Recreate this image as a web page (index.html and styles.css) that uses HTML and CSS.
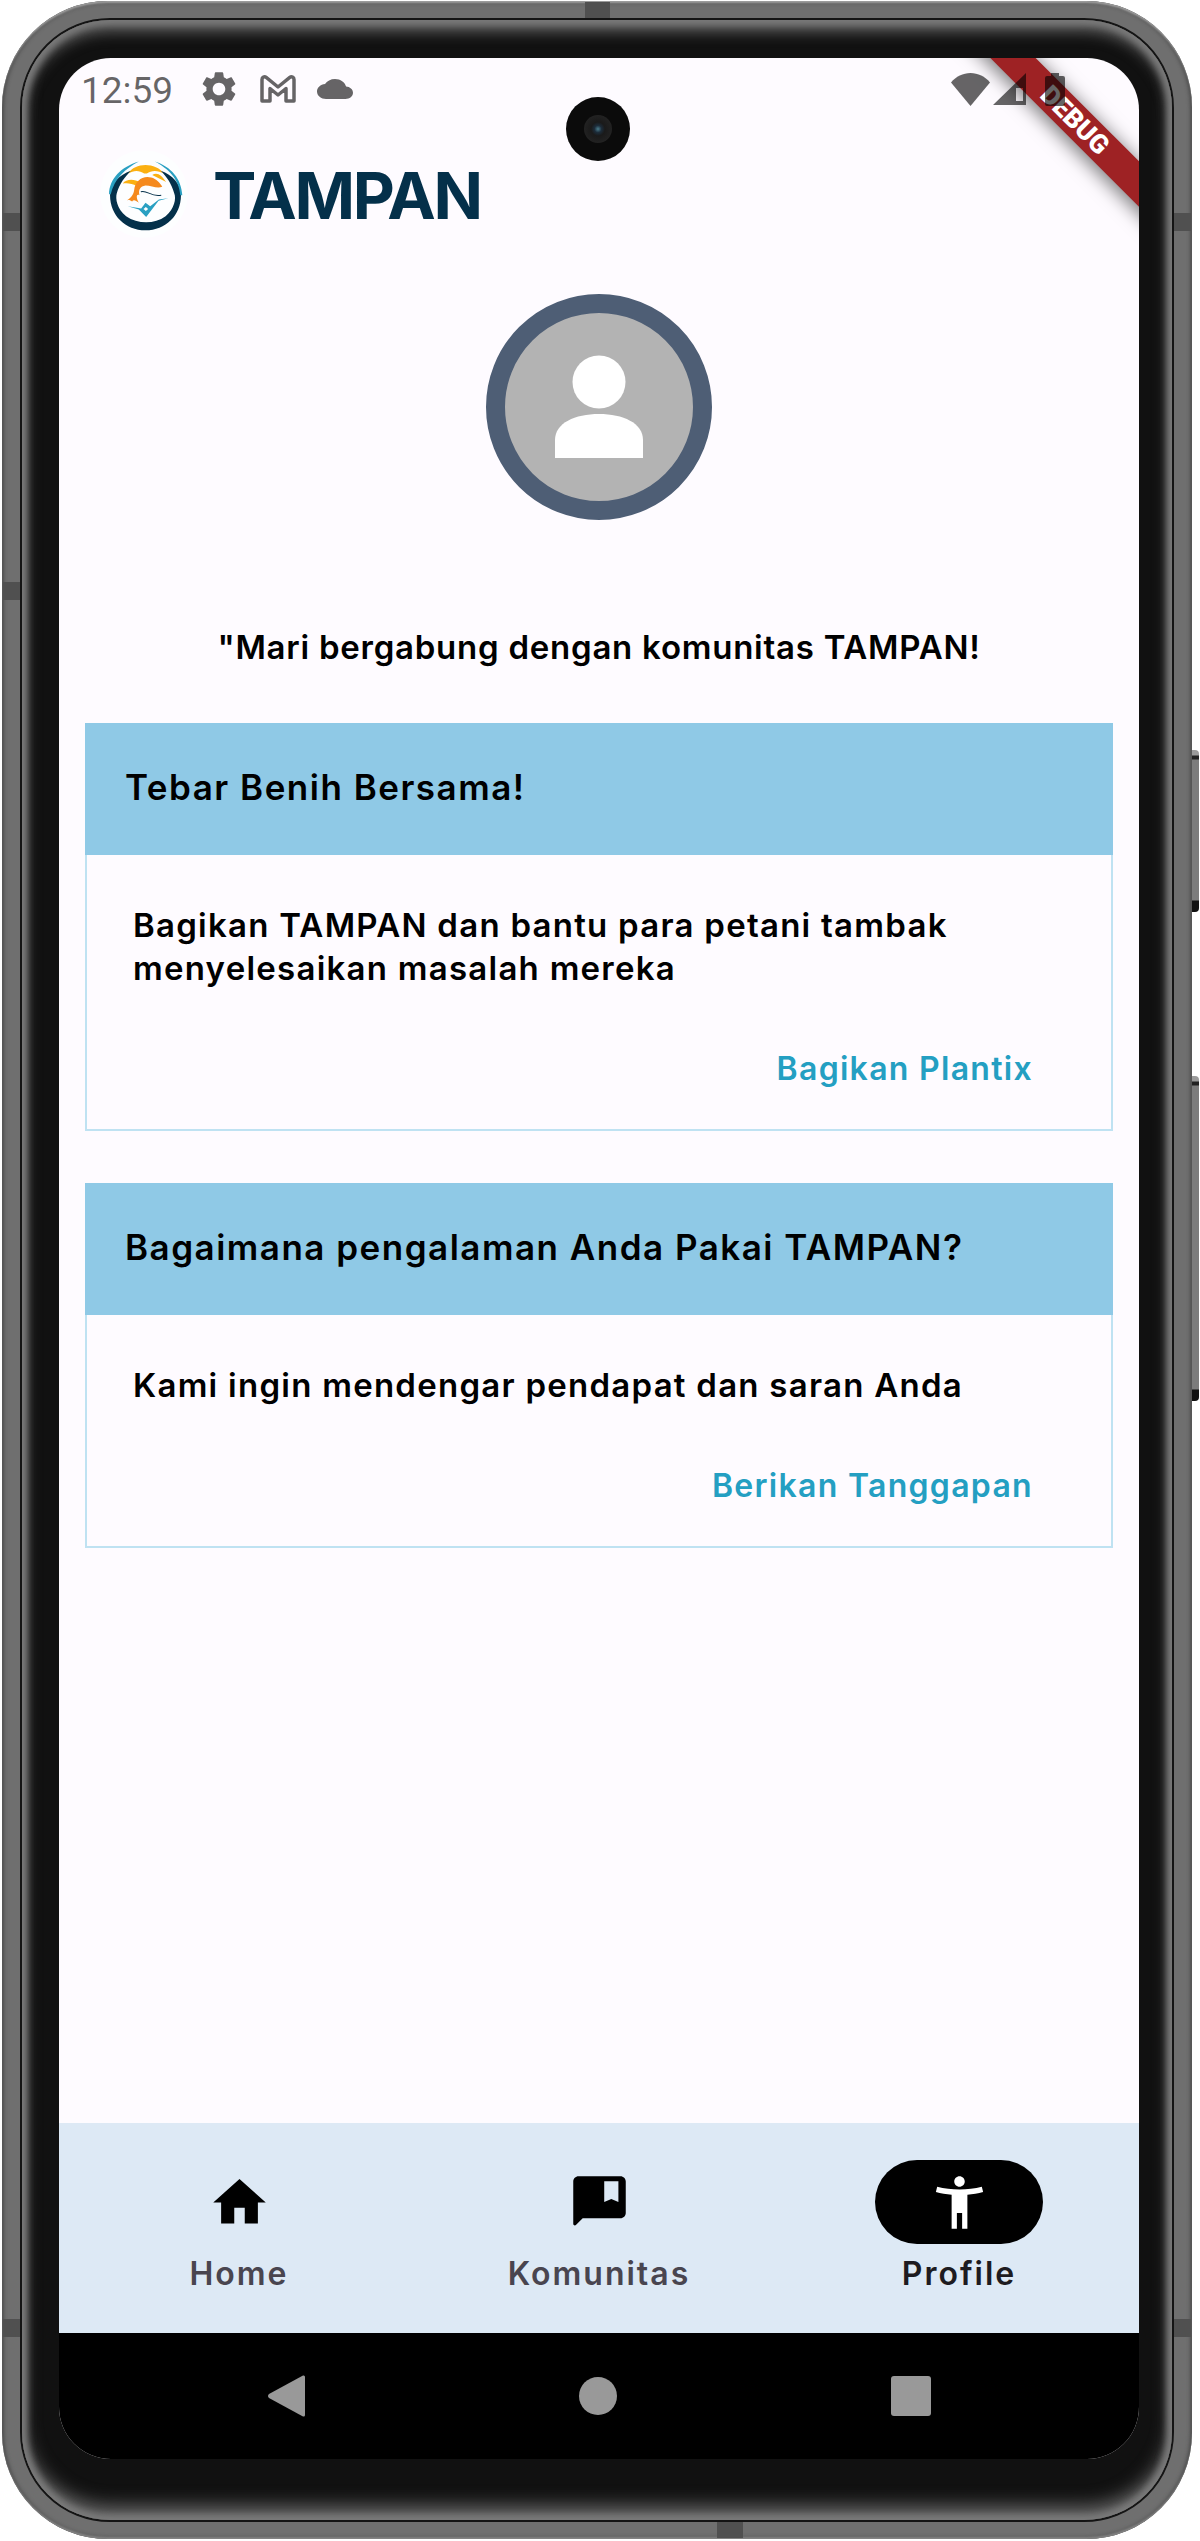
FILE: index.html
```html
<!DOCTYPE html>
<html lang="id">
<head>
<meta charset="utf-8">
<title>TAMPAN</title>
<link rel="stylesheet" href="styles.css">
</head>
<body>
<div class="device">
  <span class="band band-left-1"></span>
  <span class="band band-left-2"></span>
  <span class="band band-left-3"></span>
  <span class="band band-right-1"></span>
  <span class="band band-right-2"></span>
  <span class="band band-top"></span>
  <span class="band band-bottom"></span>
  <span class="side-key key-power"></span>
  <span class="side-key key-volume"></span>
  <div class="midline">
    <div class="bezel">
      <div class="screen">
        <div class="status">
          <span class="time">12:59</span>
          <svg class="ic-gear" viewBox="0 0 24 24"><path d="M19.14 12.94c.04-.3.06-.61.06-.94 0-.32-.02-.64-.07-.94l2.03-1.58c.18-.14.23-.41.12-.61l-1.92-3.32c-.12-.22-.37-.29-.59-.22l-2.39.96c-.5-.38-1.03-.7-1.62-.94l-.36-2.54c-.04-.24-.24-.41-.48-.41h-3.84c-.24 0-.43.17-.47.41l-.36 2.54c-.59.24-1.13.57-1.62.94l-2.39-.96c-.22-.08-.47 0-.59.22L2.74 8.87c-.12.21-.08.47.12.61l2.03 1.58c-.05.3-.09.63-.09.94s.02.64.07.94l-2.03 1.58c-.18.14-.23.41-.12.61l1.92 3.32c.12.22.37.29.59.22l2.39-.96c.5.38 1.03.7 1.62.94l.36 2.54c.05.24.24.41.48.41h3.84c.24 0 .44-.17.47-.41l.36-2.54c.59-.24 1.13-.56 1.62-.94l2.39.96c.22.08.47 0 .59-.22l1.92-3.32c.12-.22.07-.47-.12-.61l-2.01-1.58zM12 15.6c-1.98 0-3.6-1.62-3.6-3.6s1.62-3.6 3.6-3.6 3.6 1.62 3.6 3.6-1.62 3.6-3.6 3.6z"/></svg>
          <svg class="ic-mail" viewBox="0 0 36 28"><path d="M2 26V4.500C2 2.200 4.400 1 6.200 2.400L18 12 29.800 2.400C31.600 1 34 2.200 34 4.500V26H26V13.500L18 20 10 13.500V26Z"/></svg>
          <svg class="ic-cloud" viewBox="0 4 24 16" preserveAspectRatio="none"><path d="M19.35 10.04C18.67 6.59 15.64 4 12 4 9.11 4 6.6 5.64 5.35 8.04 2.34 8.36 0 10.91 0 14c0 3.31 2.690 6 6 6h13c2.760 0 5-2.240 5-5 0-2.640-2.050-4.780-4.650-4.960z"/></svg>
          <svg class="ic-wifi" viewBox="0 0 39 33"><path d="M19.500 33L0 9.500C5 3.500 12 0 19.500 0S34 3.500 39 9.500Z"/></svg>
          <svg class="ic-signal" viewBox="0 0 33 32"><path fill-rule="evenodd" d="M0 32L33 0V32ZM23 15V28H30V15Z"/></svg>
          <svg class="ic-battery" viewBox="0 0 20 33"><path d="M6 0H14V3H18Q20 3 20 5V31Q20 33 18 33H2Q0 33 0 31V5Q0 3 2 3H6Z"/></svg>
        </div>

        <div class="debug-banner"><span>DEBUG</span></div>
        <div class="camera"><span class="lens"></span></div>

        <header class="appbar">
          <div class="logo">
            <svg viewBox="122 30 263 263">
              <circle cx="253.500" cy="161.500" r="131" fill="#fdfeff"/>
              <path d="M207 100C225 66 290 66 312 100C296 90 275 90 262 100L254 100C240 90 222 90 207 100Z" fill="#fbb012"/>
              <path d="M190 130C200 116 225 116 242 127L232 138C218 130 205 128 190 130ZM278 105C292 94 306 105 320 126C306 118 292 112 278 105Z" fill="#fbb012"/>
              <path d="M198 182C212 176 222 165 224 150C226 122 250 105 275 112C290 116 302 128 308 140C292 146 275 136 258 136C242 138 236 150 240 165C232 160 228 168 238 188C228 180 222 178 218 184C212 178 205 178 198 182Z" fill="#f58a1e"/>
              <path d="M244 155C262 148 275 172 305 165" fill="none" stroke="#04304a" stroke-width="3"/>
              <path d="M152 165C152 130 180 105 214 92C196 112 180 130 172 160C168 175 172 205 200 228C235 252 285 252 318 228C345 205 350 175 344 160C336 130 322 112 304 92C338 105 364 130 364 165C364 225 318 270 258 270C198 270 152 225 152 165Z" fill="#04304a"/>
              <path d="M149 162C150 115 185 80 238 64C198 85 165 115 154 162ZM368 165C365 115 335 80 286 64C325 85 358 115 362 165Z" fill="#2aa0c2"/>
              <path d="M205 198L245 205L258 188L272 198L298 178L326 174L297 182L260 230L238 208Z" fill="#2aa0c2"/>
              <path d="M259 200L266 206L259 212L252 206Z" fill="#fff"/>
            </svg>
          </div>
          <h1 class="brand">TAMPAN</h1>
        </header>

        <main class="content">
          <div class="avatar">
            <svg viewBox="0 0 188 188"><circle cx="94" cy="69" r="26.500"/><path d="M50 145V127C50 110 70 101 94 101S138 110 138 127V145Z"/></svg>
          </div>
          <p class="tagline">"Mari bergabung dengan komunitas TAMPAN!</p>

          <section class="card">
            <h2 class="card-title">Tebar Benih Bersama!</h2>
            <div class="card-body">
              <p class="card-text">Bagikan TAMPAN dan bantu para petani tambak<br>menyelesaikan masalah mereka</p>
              <a class="card-link">Bagikan Plantix</a>
            </div>
          </section>

          <section class="card">
            <h2 class="card-title">Bagaimana pengalaman Anda Pakai TAMPAN?</h2>
            <div class="card-body">
              <p class="card-text">Kami ingin mendengar pendapat dan saran Anda</p>
              <a class="card-link">Berikan Tanggapan</a>
            </div>
          </section>
        </main>

        <nav class="tabs">
          <div class="tab">
            <div class="tab-icon"><svg viewBox="0 0 24 24"><path d="M10 20v-6h4v6h5v-8h3L12 3 2 12h3v8z"/></svg></div>
            <span class="tab-label">Home</span>
          </div>
          <div class="tab">
            <div class="tab-icon"><svg viewBox="0 0 24 24"><path fill-rule="evenodd" d="M20 2H4C2.900 2 2 2.900 2 4V20.100C2 20.700 2.700 21 3.100 20.500L5.600 18H20C21.100 18 22 17.100 22 16V4C22 2.900 21.100 2 20 2ZM13.800 3.900H19.200V11.800L16.500 10.700L13.800 11.800Z"/></svg></div>
            <span class="tab-label">Komunitas</span>
          </div>
          <div class="tab tab-active">
            <div class="tab-icon"><svg viewBox="0 0 24 24"><path d="M20.500 6c-2.610.7-5.670 1-8.500 1s-5.890-.3-8.500-1L3 8c1.860.5 4 .83 6 1v13h2v-6h2v6h2V9c2-.17 4.140-.5 6-1l-.5-2zM12 6c1.100 0 2-.9 2-2s-.9-2-2-2-2 .9-2 2 .9 2 2 2z"/></svg></div>
            <span class="tab-label">Profile</span>
          </div>
        </nav>

        <div class="sysnav">
          <svg class="sys-back" viewBox="0 0 37 42"><path d="M35 0.500Q37 0 37 2V40Q37 42 35 41.500L1 23Q-1 21 1 19Z"/></svg>
          <span class="sys-home"></span>
          <span class="sys-recent"></span>
        </div>
      </div>
    </div>
  </div>
</div>
</body>
</html>
```

FILE: styles.css
```css
* { box-sizing: border-box; }

html, body {
  margin: 0;
  padding: 0;
  background: #fff;
}

body {
  width: 1200px;
  height: 2541px;
  overflow: hidden;
  font-family: "Inter", "Liberation Sans", sans-serif;
}

/* device frame */
.device {
  position: relative;
  width: 1190px;
  height: 2538px;
  margin: 1px 0 0 2px;
  padding: 17px 18px;
  border-radius: 106px;
  background: #6f6f6f;
  box-shadow: inset 0 3px 2px -1px #a0a0a0, inset 0 -3px 2px -1px #858585, inset 0 0 4px 1px #3c3c3c;
}

.midline {
  height: 100%;
  border: 2px solid #141414;
  border-radius: 90px;
}

.bezel {
  height: 100%;
  padding: 38px 33px 61px 37px;
  border-radius: 88px;
  background: #111;
  box-shadow: inset 0 0 6px 5px #7a7a7a, inset 0 12px 14px 0 #5e5e5e, inset 0 -14px 18px 0 #6a6a6a;
}

.band {
  position: absolute;
  background: #505050;
}
.band-left-1  { left: 1px; top: 212px;  width: 17px; height: 18px; }
.band-left-2  { left: 1px; top: 581px;  width: 17px; height: 18px; }
.band-left-3  { left: 1px; top: 2318px; width: 17px; height: 18px; }
.band-right-1 { right: 1px; top: 212px;  width: 17px; height: 18px; }
.band-right-2 { right: 1px; top: 2318px; width: 17px; height: 18px; }
.band-top     { left: 583px; top: 1px; width: 25px; height: 16px; }
.band-bottom  { left: 715px; bottom: 1px; width: 26px; height: 16px; }

.side-key {
  position: absolute;
  left: 100%;
  width: 7px;
  border-radius: 0 4px 4px 0;
  background: linear-gradient(180deg, #9a9a9a 0, #9a9a9a 5px, #222 6px, #222 9px, #7c7c7c 10px, #7c7c7c calc(100% - 12px), #111 calc(100% - 11px), #111 100%);
}
.key-power  { top: 749px;  height: 162px; }
.key-volume { top: 1075px; height: 325px; }

/* screen */
.screen {
  position: relative;
  display: flex;
  flex-direction: column;
  height: 100%;
  overflow: hidden;
  border-radius: 52px;
  background: #fefbff;
}

.status {
  position: relative;
  z-index: 3;
  display: flex;
  align-items: center;
  flex: none;
  height: 62px;
  padding: 0 74px 0 22px;
  margin-bottom: 30px;
}
.status svg { display: block; flex: none; fill: rgba(0, 0, 0, .6); }

.time {
  font-family: "Roboto", sans-serif;
  font-size: 37px;
  line-height: 44px;
  margin-top: 4px;
  color: rgba(0, 0, 0, .6);
}
.ic-gear { width: 42px; height: 42px; margin-left: 25px; }
.ic-mail {
  width: 36px;
  height: 28px;
  margin-left: 20px;
}
.status .ic-mail {
  fill: none;
  stroke: rgba(0, 0, 0, .6);
  stroke-width: 3.500px;
  stroke-linejoin: round;
}
.ic-cloud  { width: 36px; height: 20px; margin-left: 21px; }
.ic-wifi   { width: 39px; height: 33px; margin-left: auto; }
.ic-signal { width: 33px; height: 32px; margin-left: 3px; }
.ic-battery { width: 20px; height: 33px; margin-left: 19px; }

.debug-banner {
  position: absolute;
  z-index: 2;
  left: 866px;
  top: 46px;
  display: flex;
  align-items: center;
  justify-content: center;
  width: 300px;
  height: 32px;
  background: #9e2224;
  box-shadow: 0 3px 18px 2px rgba(0, 0, 0, .5);
  transform: rotate(45deg);
}
.debug-banner span {
  font-family: "Roboto", sans-serif;
  font-weight: 900;
  font-size: 26.500px;
  line-height: 1;
  color: #fff;
}

.camera {
  position: absolute;
  z-index: 4;
  left: 507px;
  top: 39px;
  display: flex;
  align-items: center;
  justify-content: center;
  width: 64px;
  height: 64px;
  border-radius: 50%;
  background: #0b0b0b;
}
.lens {
  width: 28px;
  height: 28px;
  border-radius: 50%;
  background: radial-gradient(circle, #4b7d8c 0, #1c2c3a 18%, #1a1a1a 35%, #222 70%, #161616 100%);
}

/* app bar */
.appbar {
  display: flex;
  align-items: center;
  flex: none;
  height: 88px;
  padding-left: 41px;
}
.logo {
  flex: none;
  width: 88px;
  height: 88px;
}
.logo svg { display: block; width: 88px; height: 88px; }
.brand {
  margin: 4px 0 0 25px;
  font-size: 65px;
  font-weight: 700;
  line-height: 84px;
  letter-spacing: -2.300px;
  color: #04304a;
}

/* content */
.content {
  display: flex;
  flex-direction: column;
  flex: 1;
  min-height: 0;
  padding: 0 26px;
}
.avatar {
  display: flex;
  align-items: center;
  justify-content: center;
  flex: none;
  align-self: center;
  width: 226px;
  height: 226px;
  margin-top: 56px;
  border: 19px solid #4e5e75;
  border-radius: 50%;
  background: #b3b3b3;
}
.avatar svg { display: block; width: 188px; height: 188px; fill: #fff; }

.tagline {
  margin: 106px 0 54px;
  font-size: 33px;
  font-weight: 600;
  line-height: 43px;
  letter-spacing: 0.750px;
  text-align: center;
  color: #000;
}

.card {
  display: flex;
  flex-direction: column;
  flex: none;
  margin-bottom: 52px;
  border: 2px solid #bfe2f2;
}
.card-title {
  margin: -2px -2px 0;
  height: 132px;
  padding-left: 40px;
  font-size: 35px;
  font-weight: 600;
  line-height: 128px;
  letter-spacing: 1.500px;
  background: #8fc9e6;
  color: #000;
}
.card-body {
  display: flex;
  flex-direction: column;
  padding: 49px 78px 39px 46px;
}
.card-text {
  margin: 0 0 57px;
  font-size: 33px;
  font-weight: 600;
  line-height: 43px;
  letter-spacing: 1.250px;
  color: #000;
}
.card-link {
  align-self: flex-end;
  font-size: 32px;
  font-weight: 600;
  line-height: 43px;
  letter-spacing: 1.300px;
  color: #249fc2;
}

/* bottom navigation */
.tabs {
  display: grid;
  grid-template-columns: repeat(3, 1fr);
  flex: none;
  height: 210px;
  background: #dde9f5;
}
.tab {
  display: flex;
  flex-direction: column;
  align-items: center;
  padding-top: 37px;
}
.tab-icon {
  display: flex;
  align-items: center;
  justify-content: center;
  width: 168px;
  height: 84px;
  border-radius: 42px;
}
.tab-icon svg { display: block; width: 63px; height: 63px; fill: #000; }
.tab-label {
  margin-top: 9px;
  font-size: 32px;
  font-weight: 600;
  line-height: 42px;
  letter-spacing: 2px;
  color: #49454f;
}
.tab-active .tab-icon { background: #000; }
.tab-active .tab-icon svg { fill: #fff; }
.tab-active .tab-label { color: #1d1b20; }

/* system navigation */
.sysnav {
  display: flex;
  align-items: center;
  justify-content: center;
  gap: 274px;
  flex: none;
  height: 126px;
  background: #000;
}
.sys-back { display: block; width: 37px; height: 42px; fill: #999; }
.sys-home { width: 38px; height: 38px; border-radius: 50%; background: #999; }
.sys-recent { width: 40px; height: 40px; border-radius: 3px; background: #999; }
```
